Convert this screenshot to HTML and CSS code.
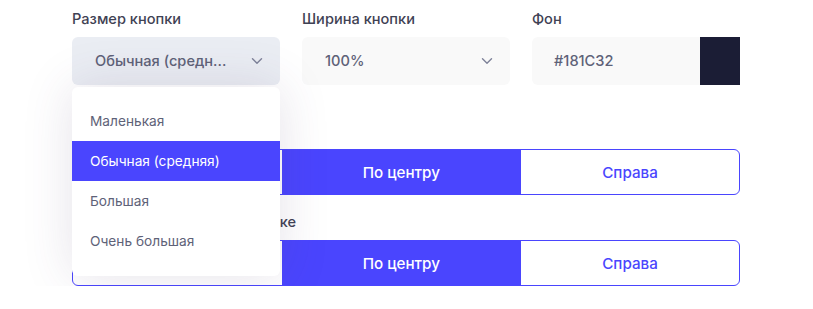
FILE: index.html
```html
<!DOCTYPE html>
<html lang="ru">
<head>
<meta charset="utf-8">
<link rel="stylesheet" href="styles.css">
</head>
<body>
<div class="panel">
  <div class="row">
    <div class="field">
      <div class="label">Размер кнопки</div>
      <div class="select select-active">
        <span class="value">Обычная (средн...</span>
        <svg class="chev" width="12" height="8" viewBox="0 0 12 8"><path d="M1.5 1.8L6 6.2L10.5 1.8" fill="none" stroke="#7e8299" stroke-width="1.4" stroke-linecap="round" stroke-linejoin="round"/></svg>
      </div>
      <ul class="dropdown">
        <li class="opt">Маленькая</li>
        <li class="opt selected">Обычная (средняя)</li>
        <li class="opt">Большая</li>
        <li class="opt">Очень большая</li>
      </ul>
    </div>
    <div class="field">
      <div class="label">Ширина кнопки</div>
      <div class="select">
        <span class="value">100%</span>
        <svg class="chev" width="12" height="8" viewBox="0 0 12 8"><path d="M1.5 1.8L6 6.2L10.5 1.8" fill="none" stroke="#7e8299" stroke-width="1.4" stroke-linecap="round" stroke-linejoin="round"/></svg>
      </div>
    </div>
    <div class="field">
      <div class="label">Фон</div>
      <div class="color-input">
        <span class="value">#181C32</span>
        <span class="swatch"></span>
      </div>
    </div>
  </div>

  <div class="section section-2">
    <div class="label">Выравнивание кнопки</div>
    <div class="segmented">
      <div class="seg">Слева</div>
      <div class="seg on">По центру</div>
      <div class="seg">Справа</div>
    </div>
  </div>

  <div class="section section-3">
    <div class="label">Выравнивание текста в кнопке</div>
    <div class="segmented">
      <div class="seg">Слева</div>
      <div class="seg on">По центру</div>
      <div class="seg">Справа</div>
    </div>
  </div>
</div>
</body>
</html>
```

FILE: styles.css
```css
* { box-sizing: border-box; }
html, body {
  margin: 0;
  padding: 0;
  background: #ffffff;
  font-family: Inter, "Noto Sans", "Liberation Sans", sans-serif;
}
.panel {
  width: 668px;
  margin-left: 72px;
  padding-top: 9px;
}
.row {
  display: grid;
  grid-template-columns: repeat(3, 208px);
  column-gap: 22px;
}
.field { position: relative; }
.label {
  font-size: 14.6px;
  line-height: 20px;
  font-weight: 500;
  color: #3f4254;
  margin-bottom: 8px;
}
.select, .color-input {
  height: 48px;
  border-radius: 6px;
  background: #f9f9f9;
  display: flex;
  align-items: center;
  font-size: 14.6px;
  font-weight: 500;
  color: #5e6278;
}
.select {
  padding: 0 17px 0 23px;
  justify-content: space-between;
}
.select-active { background: #eaedf3; }
.select .value { white-space: nowrap; }
.chev { display: block; }
.color-input {
  padding-left: 22px;
  overflow: hidden;
  border-radius: 6px 0 0 6px;
}
.color-input .value { flex: 1; }
.swatch {
  width: 40px;
  height: 48px;
  background: #1b1d35;
}

.dropdown {
  position: absolute;
  left: 0;
  top: 78px;
  width: 208px;
  margin: 0;
  padding: 14px 0 15px;
  list-style: none;
  background: #ffffff;
  border-radius: 6px;
  box-shadow: 0 0 50px 0 rgba(82, 63, 105, 0.15);
  z-index: 10;
}
.opt {
  height: 40px;
  display: flex;
  align-items: center;
  padding-left: 18px;
  font-size: 13.7px;
  font-weight: 400;
  color: #5e6278;
}
.opt.selected {
  background: #4a45fe;
  color: #ffffff;
}

.section-2 { margin-top: 36px; }
.section-3 { margin-top: 17px; }
.segmented {
  display: flex;
  height: 46px;
  border: 1px solid #4a45fe;
  border-radius: 6px;
  overflow: hidden;
}
.seg {
  flex: 1 1 auto;
  display: flex;
  align-items: center;
  justify-content: center;
  font-size: 15.2px;
  font-weight: 500;
  color: #4a45fe;
}
.seg.on {
  background: #4a45fe;
  color: #ffffff;
}
```
